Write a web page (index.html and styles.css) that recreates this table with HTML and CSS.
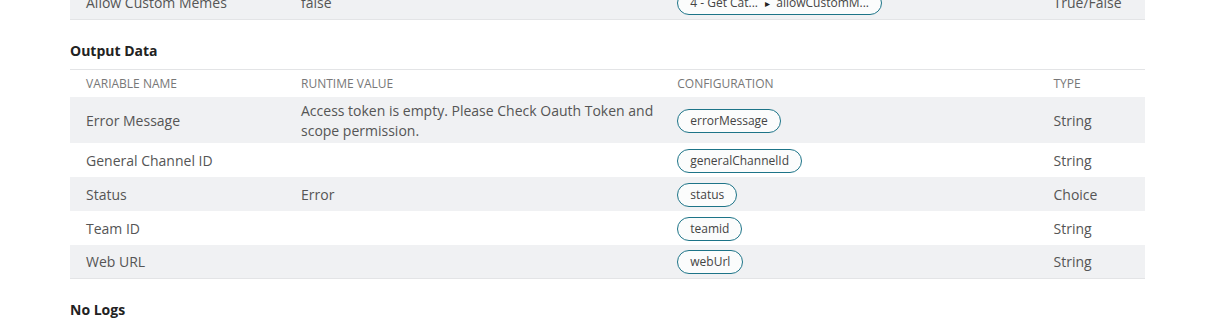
FILE: index.html
```html
<!DOCTYPE html>
<html lang="en">
<head>
  <meta charset="UTF-8" />
  <title>Step Details</title>
  <link rel="stylesheet" href="styles.css">
</head>
<body>
  <div class="page">
    <table class="data-table">
      <tbody>
        <tr class="shaded">
          <td>Allow Custom Memes</td>
          <td>false</td>
          <td><span class="pill">4 - Get Cat... <span class="caret">&#9656;</span> allowCustomM...</span></td>
          <td>True/False</td>
        </tr>
      </tbody>
    </table>

    <h2>Output Data</h2>
    <table class="data-table">
      <thead>
        <tr>
          <th>Variable Name</th><th>Runtime Value</th><th>Configuration</th><th>Type</th>
        </tr>
      </thead>
      <tbody>
        <tr class="shaded">
          <td>Error Message</td>
          <td>Access token is empty. Please Check Oauth Token and scope permission.</td>
          <td><span class="pill">errorMessage</span></td>
          <td>String</td>
        </tr>
        <tr>
          <td>General Channel ID</td>
          <td></td>
          <td><span class="pill">generalChannelId</span></td>
          <td>String</td>
        </tr>
        <tr class="shaded">
          <td>Status</td>
          <td>Error</td>
          <td><span class="pill">status</span></td>
          <td>Choice</td>
        </tr>
        <tr>
          <td>Team ID</td>
          <td></td>
          <td><span class="pill">teamid</span></td>
          <td>String</td>
        </tr>
        <tr class="shaded">
          <td>Web URL</td>
          <td></td>
          <td><span class="pill">webUrl</span></td>
          <td>String</td>
        </tr>
      </tbody>
    </table>

    <h2>No Logs</h2>
  </div>
</body>
</html>
```

FILE: styles.css
```css
* { box-sizing: border-box; margin: 0; padding: 0; }
body {
  font-family: "Open Sans", "Noto Sans", sans-serif;
  color: #555;
  background: #fff;
  font-size: 14px;
}
.page {
  width: 1075px;
  margin: -15px 0 0 70px;
}
h2 {
  font-size: 14px;
  font-weight: 700;
  color: #222;
  line-height: 20px;
  margin: 21px 0 8px;
}
.data-table {
  width: 100%;
  border-collapse: collapse;
  table-layout: fixed;
}
.data-table th:nth-child(1), .data-table td:nth-child(1) { width: 20%; }
.data-table th:nth-child(2), .data-table td:nth-child(2) { width: 35%; }
.data-table th:nth-child(3), .data-table td:nth-child(3) { width: 35%; }
.data-table th:nth-child(4), .data-table td:nth-child(4) { width: 10%; }
.data-table th {
  text-align: left;
  font-weight: 400;
  font-size: 12px;
  text-transform: uppercase;
  color: #777;
  padding: 5px 8px 4px 16px;
  line-height: 18px;
  border-top: 1px solid #e3e4e6;
}
.data-table td {
  height: 34px;
  padding: 4px 6px 2px 16px;
  line-height: 20px;
  vertical-align: middle;
}
.data-table tr.shaded td { background: #f0f1f3; }
.data-table tbody tr:last-child td { border-bottom: 1px solid #e3e4e6; }
.pill {
  display: inline-block;
  vertical-align: middle;
  font-size: 12px;
  line-height: 22px;
  color: #444;
  padding: 0 12px;
  border: 1px solid #1d7488;
  border-radius: 12px;
  background: #fbfcfc;
  white-space: nowrap;
}
.caret {
  font-size: 10px;
  color: #222;
  margin: 0 3px 0 4px;
}
```
